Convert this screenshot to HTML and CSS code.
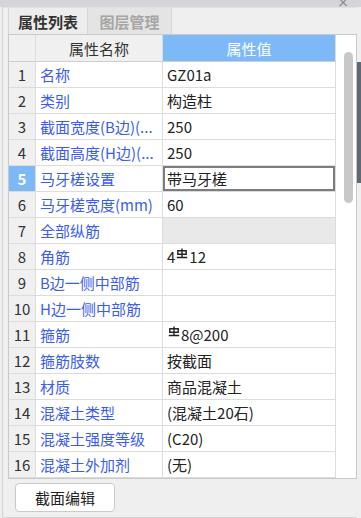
FILE: index.html
```html
<!DOCTYPE html>
<html lang="zh">
<head>
    <meta charset="UTF-8">
    <meta name="viewport" content="width=device-width, initial-scale=1.0">
    <title>属性列表</title>
    <link rel="stylesheet" href="styles.css">
</head>
<body>
    <div class="titlebar"><span class="close">×</span></div>
    <div class="main">
        <div class="panel">
            <div class="tabs">
                <div class="tab active">属性列表</div>
                <div class="tab">图层管理</div>
            </div>
            <div class="grid-box">
                <div class="props">
                    <div class="cell num head"></div>
                    <div class="cell head">属性名称</div>
                    <div class="cell head sel">属性值</div>

                    <div class="cell num">1</div><div class="cell name">名称</div><div class="cell val">GZ01a</div>
                    <div class="cell num">2</div><div class="cell name">类别</div><div class="cell val">构造柱</div>
                    <div class="cell num">3</div><div class="cell name">截面宽度(B边)(...</div><div class="cell val">250</div>
                    <div class="cell num">4</div><div class="cell name">截面高度(H边)(...</div><div class="cell val">250</div>
                    <div class="cell num cur">5</div><div class="cell name">马牙槎设置</div><div class="cell val editing">带马牙槎</div>
                    <div class="cell num">6</div><div class="cell name">马牙槎宽度(mm)</div><div class="cell val">60</div>
                    <div class="cell num">7</div><div class="cell name">全部纵筋</div><div class="cell val group"></div>
                    <div class="cell num">8</div><div class="cell name">角筋</div><div class="cell val">4<svg class="bar" viewBox="0 0 12 11"><path d="M6 0.5V9.5M0.8 9.5H11.2M1.8 2.8H10.2V6.2H1.8Z"/></svg>12</div>
                    <div class="cell num">9</div><div class="cell name">B边一侧中部筋</div><div class="cell val"></div>
                    <div class="cell num">10</div><div class="cell name">H边一侧中部筋</div><div class="cell val"></div>
                    <div class="cell num">11</div><div class="cell name">箍筋</div><div class="cell val"><svg class="bar" viewBox="0 0 12 11"><path d="M6 0.5V9.5M0.8 9.5H11.2M1.8 2.8H10.2V6.2H1.8Z"/></svg>8@200</div>
                    <div class="cell num">12</div><div class="cell name">箍筋肢数</div><div class="cell val">按截面</div>
                    <div class="cell num">13</div><div class="cell name">材质</div><div class="cell val">商品混凝土</div>
                    <div class="cell num">14</div><div class="cell name">混凝土类型</div><div class="cell val">(混凝土20石)</div>
                    <div class="cell num">15</div><div class="cell name">混凝土强度等级</div><div class="cell val">(C20)</div>
                    <div class="cell num">16</div><div class="cell name">混凝土外加剂</div><div class="cell val">(无)</div>
                </div>
                <div class="vscroll"><div class="thumb"></div></div>
            </div>
            <div class="footer">
                <button class="btn">截面编辑</button>
            </div>
        </div>
        <div class="side"><div class="strip"></div></div>
    </div>
</body>
</html>
```

FILE: styles.css
```css
* {
    box-sizing: border-box;
}
html, body {
    margin: 0;
    padding: 0;
    height: 100%;
}
body {
    font-family: "Noto Sans CJK SC", "Noto Sans", sans-serif;
    font-size: 15px;
    color: #222;
    background-color: #efefef;
    display: flex;
    flex-direction: column;
    overflow: hidden;
}
.titlebar {
    height: 7px;
    background-color: #d5d5d9;
    display: flex;
    justify-content: flex-end;
    align-items: flex-end;
    overflow: hidden;
    padding-right: 12px;
}
.close {
    font-family: "DejaVu Sans", sans-serif;
    font-size: 14px;
    line-height: 9px;
    color: #8a8a8a;
}
.main {
    flex: 1;
    display: flex;
}
.panel {
    width: 355px;
    margin-left: 2px;
    border-left: 1px solid #d3d3d3;
    border-bottom: 1px solid #d3d3d3;
    display: flex;
    flex-direction: column;
}
.tabs {
    height: 27px;
    display: flex;
    padding-left: 5px;
    border-top: 1px solid #e2e2e2;
}
.tab {
    width: 84px;
    display: flex;
    align-items: center;
    justify-content: center;
    font-weight: bold;
    color: #a6a6a6;
    background-color: #e4e4e4;
    border-right: 1px solid #d6d6d6;
}
.tab.active {
    width: 80px;
    color: #333;
    background-color: #ededed;
    border-left: 1px solid #d6d6d6;
}
.grid-box {
    margin-left: 5px;
    width: 349px;
    height: 445px;
    border: 1px solid #c9c9c9;
    background-color: #fff;
    display: flex;
}
.props {
    display: grid;
    grid-template-columns: 27px 127px 173px;
    grid-template-rows: 27px;
    grid-auto-rows: 26px;
    align-content: start;
}
.cell {
    border-right: 1px solid #dcdcdc;
    border-bottom: 1px solid #dcdcdc;
    display: flex;
    align-items: center;
    padding-left: 4px;
    white-space: nowrap;
    overflow: hidden;
}
.num {
    background-color: #f0f0f0;
    justify-content: center;
    padding-left: 0;
    color: #333;
}
.num.cur {
    background-color: #7cb9f6;
    color: #fff;
    font-weight: bold;
}
.head {
    background-color: #f0f0f0;
    justify-content: center;
    padding-left: 0;
    color: #333;
    border-bottom-color: #cfcfcf;
}
.head.sel {
    background-color: #7cb9f6;
    color: #fff;
}
.name {
    color: #3b5cf2;
}
.val.group {
    background-color: #e9e9e9;
}
.val.editing {
    box-shadow: inset 0 0 0 2px #7d7d7d;
}
.bar {
    width: 12px;
    height: 11px;
    margin: 0 1px 6px 1px;
    fill: none;
    stroke: #222;
    stroke-width: 1.4;
}
.vscroll {
    flex: 1;
    background-color: #fff;
    padding: 17px 0 0 8px;
}
.thumb {
    width: 9px;
    height: 151px;
    border-radius: 5px;
    background-color: #c8c8c8;
}
.footer {
    flex: 1;
    padding: 4px 0 0 12px;
}
.btn {
    width: 100px;
    height: 29px;
    font-family: inherit;
    font-size: 15px;
    color: #222;
    background-color: #fff;
    border: 1px solid #cacaca;
    border-radius: 4px;
    cursor: pointer;
}
.side {
    flex: 1;
    padding-top: 55px;
}
.strip {
    height: 121px;
    background-color: #5d6a73;
}
```
